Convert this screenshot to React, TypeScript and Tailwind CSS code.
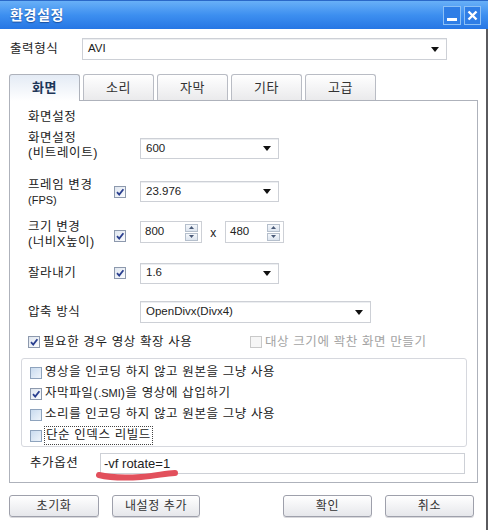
import React from 'react'

const font = { fontFamily: '"Liberation Sans", "Noto Sans CJK KR", sans-serif' }

function Arrow() {
  return (
    <svg width="8" height="5" viewBox="0 0 8 5" className="shrink-0">
      <path d="M0 0 H8 L4 5 Z" fill="#111" />
    </svg>
  )
}

function Select({ value, className }: { value: string; className: string }) {
  return (
    <div
      className={`flex items-center justify-between border border-[#cdd0d6] bg-white pl-[5px] pr-[7px] text-[11.5px] tracking-normal text-[#222] shadow-[inset_0_1px_0_#eceef1] ${className}`}
    >
      <span>{value}</span>
      <Arrow />
    </div>
  )
}

function Check({ state }: { state: 'on' | 'off' | 'disabled' }) {
  if (state === 'disabled') {
    return <div className="h-[12px] w-[12px] shrink-0 border border-[#c9c9c9] bg-[#f6f6f6]" />
  }
  if (state === 'off') {
    return (
      <div className="h-[12px] w-[12px] shrink-0 border border-[#8ea3bd] bg-gradient-to-br from-[#c9dbef] to-[#eef4fb]" />
    )
  }
  return (
    <div className="flex h-[12px] w-[12px] shrink-0 items-center justify-center border border-[#8d99ad] bg-gradient-to-br from-[#dfe6ef] to-[#fbfcfe]">
      <svg width="10" height="10" viewBox="0 0 10 10">
        <path d="M2 5.2 L4.2 7.6 L8.4 2.2" fill="none" stroke="#2a3f8f" strokeWidth="1.8" />
      </svg>
    </div>
  )
}

function Spinner({ value, className }: { value: string; className: string }) {
  return (
    <div className={`flex h-[22px] items-center justify-between border border-[#cdd0d6] bg-white pl-[4px] pr-[3px] text-[11.5px] tracking-normal text-[#222] ${className}`}>
      <span>{value}</span>
      <div className="flex flex-col gap-[1px]">
        {[0, 1].map(i => (
          <div
            key={i}
            className="flex h-[8px] w-[13px] items-center justify-center border border-[#b5bfcc] bg-gradient-to-b from-[#f4f7fb] to-[#dde5ef]"
          >
            <svg width="5" height="3" viewBox="0 0 5 3">
              <path d={i === 0 ? 'M0 3 H5 L2.5 0 Z' : 'M0 0 H5 L2.5 3 Z'} fill="#4a5a78" />
            </svg>
          </div>
        ))}
      </div>
    </div>
  )
}

function Button({ label, className }: { label: string; className: string }) {
  return (
    <div
      className={`flex h-[22px] items-center justify-center rounded-[3px] border border-[#9ea0ab] bg-gradient-to-b from-white to-[#e6e7eb] text-[12px] text-[#333] shadow-[0_1px_0_#d8d8dc] ${className}`}
    >
      {label}
    </div>
  )
}

const tabs = ['화면', '소리', '자막', '기타', '고급']

export default function App() {
  return (
    <div style={font} className="relative flex h-[530px] w-[488px] flex-col overflow-hidden bg-white tracking-[0.6px] text-[#222]">
      {/* title bar */}
      <div className="flex h-[29px] shrink-0 items-center justify-between border-t border-[#2a68c8] bg-gradient-to-b from-[#68b0f7] via-[#3d8ff0] to-[#2676e4] pl-[10px] pr-[7px]">
        <span className="text-[14px] font-bold text-white [text-shadow:0_1px_1px_#1a4f9e]">환경설정</span>
        <div className="flex gap-[3px]">
          <div className="flex h-[19px] w-[18px] items-end justify-center border border-[#8cc0f5] bg-[#2f7ee6] pb-[3px]">
            <div className="h-[3px] w-[10px] bg-white" />
          </div>
          <div className="flex h-[19px] w-[17px] items-center justify-center border border-[#8cc0f5] bg-[#2f7ee6]">
            <svg width="11" height="11" viewBox="0 0 11 11">
              <path d="M1.5 1.5 L9.5 9.5 M9.5 1.5 L1.5 9.5" stroke="white" strokeWidth="2.4" />
            </svg>
          </div>
        </div>
      </div>

      <div className="flex flex-1 flex-col border-r-[2px] border-[#5a5a5e]">
        {/* output format */}
        <div className="mt-[9px] flex h-[22px] items-center pl-[10px]">
          <span className="w-[72px] text-[12.5px]">출력형식</span>
          <Select value="AVI" className="h-[22px] w-[365px]" />
        </div>

        {/* tabs */}
        <div className="relative z-10 mt-[14px] flex h-[26px] items-end gap-[3px] pl-[9px]">
          {tabs.map((t, i) =>
            i === 0 ? (
              <div
                key={t}
                className="-mb-px flex h-[27px] w-[71px] items-center justify-center rounded-t-[3px] border border-b-0 border-[#aeb2bb] bg-gradient-to-b from-[#e4ebf5] to-white text-[13px] font-bold text-[#1d3658]"
              >
                {t}
              </div>
            ) : (
              <div
                key={t}
                className="flex h-[26px] w-[71px] items-center justify-center rounded-t-[3px] border border-b-0 border-[#b9bcc4] bg-gradient-to-b from-white to-[#eaeaec] text-[13px] text-[#333]"
              >
                {t}
              </div>
            )
          )}
        </div>

        {/* panel */}
        <div className="ml-[9px] flex h-[383px] w-[469px] flex-col border border-[#aeb2bb] bg-white pl-[11px]">
          <div className="flex flex-col pl-[7px] text-[12.5px]">
            <div className="mt-[8px] h-[16px] leading-[16px]">화면설정</div>

            <div className="mt-[6px] flex h-[32px]">
              <div className="w-[112px] leading-[15px]">
                <div>화면설정</div>
                <div>(비트레이트)</div>
              </div>
              <Select value="600" className="mt-[7px] h-[21px] w-[139px]" />
            </div>

            <div className="mt-[15px] flex h-[30px]">
              <div className="w-[86px]">
                <div className="leading-[15px]">프레임 변경</div>
                <div className="text-[11px] leading-[14px] tracking-normal">(FPS)</div>
              </div>
              <div className="mt-[8px] w-[26px]">
                <Check state="on" />
              </div>
              <Select value="23.976" className="mt-[3px] h-[21px] w-[139px]" />
            </div>

            <div className="mt-[12px] flex h-[30px]">
              <div className="w-[86px] leading-[15px]">
                <div>크기 변경</div>
                <div>(너비X높이)</div>
              </div>
              <div className="mt-[10px] w-[26px]">
                <Check state="on" />
              </div>
              <div className="mt-[1px] flex">
                <Spinner value="800" className="w-[62px]" />
                <span className="w-[23px] pt-[3px] text-center text-[12px]">x</span>
                <Spinner value="480" className="w-[59px]" />
              </div>
            </div>

            <div className="mt-[12px] flex h-[22px] items-center">
              <div className="w-[86px]">잘라내기</div>
              <div className="w-[26px]">
                <Check state="on" />
              </div>
              <Select value="1.6" className="h-[21px] w-[139px]" />
            </div>

            <div className="mt-[17px] flex h-[22px] items-center">
              <div className="w-[112px]">압축 방식</div>
              <Select value="OpenDivx(Divx4)" className="h-[22px] w-[231px]" />
            </div>

            <div className="mt-[12px] flex h-[14px] items-center">
              <div className="flex w-[222px] items-center gap-[3px]">
                <Check state="on" />
                <span>필요한 경우 영상 확장 사용</span>
              </div>
              <div className="flex items-center gap-[3px] text-[#a3a3a3]">
                <Check state="disabled" />
                <span>대상 크기에 꽉찬 화면 만들기</span>
              </div>
            </div>
          </div>

          {/* options group */}
          <div className="mt-[9px] flex h-[89px] w-[446px] flex-col rounded-[3px] border border-[#d6d8de] pl-[8px] pt-[3px] text-[12.5px]">
            <div className="flex h-[21px] items-center gap-[3px]">
              <Check state="off" />
              <span>영상을 인코딩 하지 않고 원본을 그냥 사용</span>
            </div>
            <div className="flex h-[21px] items-center gap-[3px]">
              <Check state="on" />
              <span>
                자막파일(<span className="text-[11px] tracking-normal">.SMI</span>)을 영상에 삽입하기
              </span>
            </div>
            <div className="flex h-[21px] items-center gap-[3px]">
              <Check state="off" />
              <span>소리를 인코딩 하지 않고 원본을 그냥 사용</span>
            </div>
            <div className="flex h-[21px] items-center gap-[2px]">
              <Check state="off" />
              <span className="border border-dotted border-[#444] px-[1px] leading-[17px]">단순 인덱스 리빌드</span>
            </div>
          </div>

          {/* extra options */}
          <div className="relative mt-[6px] flex h-[21px] items-center pl-[9px] text-[12.5px]">
            <span className="w-[70px]">추가옵션</span>
            <div className="flex h-[21px] w-[365px] items-center border border-[#cdd0d6] bg-white pl-[3px] text-[13px] tracking-normal">
              -vf rotate=1
            </div>
            <svg className="absolute left-[74px] top-[13px]" width="86" height="16" viewBox="0 0 86 16">
              <path
                d="M4 9 C 16 12, 30 12, 46 11 S 70 7, 80 7"
                fill="none"
                stroke="#e2505c"
                strokeWidth="6"
                strokeLinecap="round"
              />
            </svg>
          </div>
        </div>

        {/* buttons */}
        <div className="mt-[12px] flex pl-[9px]">
          <Button label="초기화" className="w-[90px]" />
          <Button label="내설정 추가" className="ml-[13px] w-[88px]" />
          <Button label="확인" className="ml-[83px] w-[89px]" />
          <Button label="취소" className="ml-[13px] w-[89px]" />
        </div>
      </div>
    </div>
  )
}
